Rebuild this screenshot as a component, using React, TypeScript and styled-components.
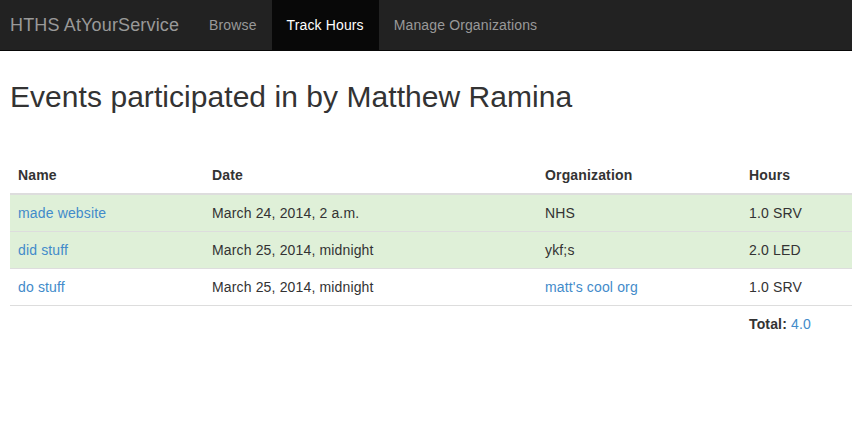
import styled, { createGlobalStyle } from "styled-components";

const GlobalStyle = createGlobalStyle`
  body {
    margin: 0;
    background: #fff;
    color: #333;
    font-family: "Liberation Sans", Arial, sans-serif;
    font-size: 14px;
    line-height: 1.428571;
    overflow: hidden;
  }
  a {
    color: #428bca;
    text-decoration: none;
  }
`;

const Navbar = styled.nav`
  display: flex;
  align-items: stretch;
  height: 50px;
  background: #222;
  border-bottom: 1px solid #080808;
  padding-left: 10px;
`;

const Brand = styled.a`
  display: block;
  padding: 15px 15px 15px 0;
  font-size: 18px;
  line-height: 20px;
  letter-spacing: 0.15px;
  color: #999;
`;

const NavList = styled.ul`
  display: flex;
  margin: 0;
  padding: 0;
  list-style: none;
`;

const NavLink = styled.a<{ active?: boolean }>`
  display: block;
  padding: 15px;
  line-height: 20px;
  letter-spacing: 0.13px;
  color: ${(props) => (props.active ? "#fff" : "#999")};
  background: ${(props) => (props.active ? "#080808" : "transparent")};
`;

const Container = styled.main`
  padding: 0 0 0 10px;
`;

const Heading = styled.h2`
  margin: 29px 0 44px;
  font-size: 30px;
  font-weight: 500;
  line-height: 1.1;
  letter-spacing: 0.05px;
  color: #333;
`;

const Table = styled.table`
  width: 842px;
  table-layout: fixed;
  border-collapse: collapse;
  border-spacing: 0;
  letter-spacing: 0.15px;
`;

const Th = styled.th<{ w: number }>`
  box-sizing: border-box;
  width: ${(props) => props.w}px;
  padding: 8px;
  text-align: left;
  font-weight: bold;
  line-height: 20px;
  border-bottom: 2px solid #ddd;
  vertical-align: bottom;
`;

const Row = styled.tr<{ success?: boolean }>`
  background: ${(props) => (props.success ? "#dff0d8" : "transparent")};
`;

const Td = styled.td`
  padding: 8px;
  line-height: 20px;
  border-top: 1px solid #ddd;
  vertical-align: top;
  white-space: nowrap;
`;

const events = [
  { name: "made website", date: "March 24, 2014, 2 a.m.", org: "NHS", orgLink: false, hours: "1.0 SRV", success: true },
  { name: "did stuff", date: "March 25, 2014, midnight", org: "ykf;s", orgLink: false, hours: "2.0 LED", success: true },
  { name: "do stuff", date: "March 25, 2014, midnight", org: "matt's cool org", orgLink: true, hours: "1.0 SRV", success: false },
];

const App = () => {
  return (
    <>
      <GlobalStyle />
      <Navbar>
        <Brand href="#">HTHS AtYourService</Brand>
        <NavList>
          <li>
            <NavLink href="#">Browse</NavLink>
          </li>
          <li>
            <NavLink href="#" active>
              Track Hours
            </NavLink>
          </li>
          <li>
            <NavLink href="#">Manage Organizations</NavLink>
          </li>
        </NavList>
      </Navbar>
      <Container>
        <Heading>Events participated in by Matthew Ramina</Heading>
        <Table>
          <thead>
            <tr>
              <Th w={194}>Name</Th>
              <Th w={333}>Date</Th>
              <Th w={204}>Organization</Th>
              <Th w={111}>Hours</Th>
            </tr>
          </thead>
          <tbody>
            {events.map((e) => (
              <Row key={e.name} success={e.success}>
                <Td>
                  <a href="#">{e.name}</a>
                </Td>
                <Td>{e.date}</Td>
                <Td>{e.orgLink ? <a href="#">{e.org}</a> : e.org}</Td>
                <Td>{e.hours}</Td>
              </Row>
            ))}
            <Row>
              <Td />
              <Td />
              <Td />
              <Td>
                <b>Total:</b> <a href="#">4.0</a>
              </Td>
            </Row>
          </tbody>
        </Table>
      </Container>
    </>
  );
};

export default App;
